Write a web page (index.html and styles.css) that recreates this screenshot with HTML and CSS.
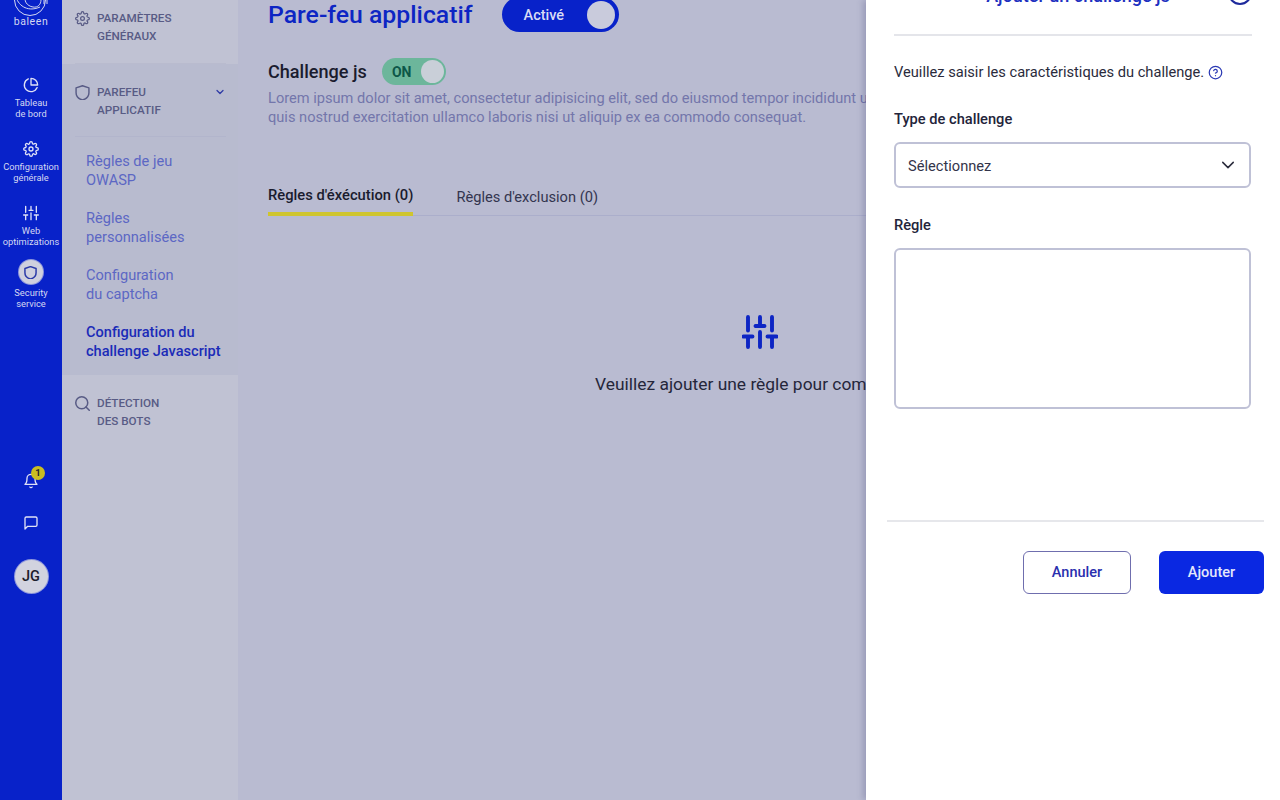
FILE: index.html
```html
<!DOCTYPE html>
<html lang="fr">
<head>
    <meta charset="UTF-8">
    <meta name="viewport" content="width=device-width, initial-scale=1.0">
    <title>Baleen - Pare-feu applicatif</title>
    <link rel="stylesheet" href="styles.css">
</head>
<body>
    <div class="app">
        <!-- Main rail -->
        <nav class="rail">
            <div class="rail-logo">
                <svg class="logo-mark" viewBox="0 0 36 16" fill="none" stroke="currentColor" stroke-width="1">
                    <circle cx="17" cy="0" r="15.5"/>
                    <path d="M3 -3c3 10 13 15 24 10"/>
                    <path d="M13 -6c-3 7 1 12 7 13 5 1 8-3 8-7"/>
                    <path d="M31 -2v6M34 -2v6"/>
                </svg>
                <span class="logo-text">baleen</span>
            </div>
            <div class="rail-item">
                <svg class="rail-icon" viewBox="0 0 24 24"><path d="M21.21 15.89A10 10 0 1 1 8 2.83"/><path d="M22 12A10 10 0 0 0 12 2v10z"/></svg>
                <span>Tableau<br>de bord</span>
            </div>
            <div class="rail-item">
                <svg class="rail-icon" viewBox="0 0 24 24"><circle cx="12" cy="12" r="3"/><path d="M19.4 15a1.65 1.65 0 0 0 .33 1.82l.06.06a2 2 0 0 1 0 2.83 2 2 0 0 1-2.83 0l-.06-.06a1.65 1.65 0 0 0-1.82-.33 1.65 1.65 0 0 0-1 1.51V21a2 2 0 0 1-2 2 2 2 0 0 1-2-2v-.09A1.65 1.65 0 0 0 9 19.4a1.65 1.65 0 0 0-1.82.33l-.06.06a2 2 0 0 1-2.83 0 2 2 0 0 1 0-2.83l.06-.06a1.65 1.65 0 0 0 .33-1.82 1.65 1.65 0 0 0-1.51-1H3a2 2 0 0 1-2-2 2 2 0 0 1 2-2h.09A1.65 1.65 0 0 0 4.6 9a1.65 1.65 0 0 0-.33-1.82l-.06-.06a2 2 0 0 1 0-2.83 2 2 0 0 1 2.83 0l.06.06a1.65 1.65 0 0 0 1.82.33H9a1.65 1.65 0 0 0 1-1.51V3a2 2 0 0 1 2-2 2 2 0 0 1 2 2v.09a1.65 1.65 0 0 0 1 1.51 1.65 1.65 0 0 0 1.82-.33l.06-.06a2 2 0 0 1 2.83 0 2 2 0 0 1 0 2.83l-.06.06a1.65 1.65 0 0 0-.33 1.82V9a1.65 1.65 0 0 0 1.51 1H21a2 2 0 0 1 2 2 2 2 0 0 1-2 2h-.09a1.65 1.65 0 0 0-1.51 1z"/></svg>
                <span>Configuration<br>générale</span>
            </div>
            <div class="rail-item">
                <svg class="rail-icon" viewBox="0 0 24 24"><path d="M4 22v-7M4 11V2M12 22V12M12 8V2M20 22v-7M20 11V2M1 15h6M9 8h6M17 15h6"/></svg>
                <span>Web<br>optimizations</span>
            </div>
            <div class="rail-item rail-item-active">
                <div class="rail-bubble">
                    <svg class="bubble-icon" viewBox="1.5 1 21 21"><path d="M12 2l9 3v7c0 6-5 9-9 10-4-1-9-4-9-10V5z"/></svg>
                </div>
                <span>Security<br>service</span>
            </div>

            <div class="rail-bottom">
                <div class="bell">
                    <svg class="rail-icon" viewBox="0 0 24 24"><path d="M18 8A6 6 0 0 0 6 8c0 7-3 9-3 9h18s-3-2-3-9"/><path d="M13.73 21a2 2 0 0 1-3.46 0"/></svg>
                    <span class="bell-badge">1</span>
                </div>
                <svg class="rail-icon" viewBox="0 0 24 24"><path d="M21 15a2 2 0 0 1-2 2H7l-4 4V5a2 2 0 0 1 2-2h14a2 2 0 0 1 2 2z"/></svg>
                <div class="avatar">JG</div>
            </div>
        </nav>

        <!-- Section menu -->
        <aside class="menu">
            <section class="menu-section menu-section-first">
                <div class="menu-head">
                    <svg class="menu-icon" viewBox="0 0 24 24"><circle cx="12" cy="12" r="3"/><path d="M19.4 15a1.65 1.65 0 0 0 .33 1.82l.06.06a2 2 0 0 1 0 2.83 2 2 0 0 1-2.83 0l-.06-.06a1.65 1.65 0 0 0-1.82-.33 1.65 1.65 0 0 0-1 1.51V21a2 2 0 0 1-2 2 2 2 0 0 1-2-2v-.09A1.65 1.65 0 0 0 9 19.4a1.65 1.65 0 0 0-1.82.33l-.06.06a2 2 0 0 1-2.83 0 2 2 0 0 1 0-2.83l.06-.06a1.65 1.65 0 0 0 .33-1.82 1.65 1.65 0 0 0-1.51-1H3a2 2 0 0 1-2-2 2 2 0 0 1 2-2h.09A1.65 1.65 0 0 0 4.6 9a1.65 1.65 0 0 0-.33-1.82l-.06-.06a2 2 0 0 1 0-2.83 2 2 0 0 1 2.83 0l.06.06a1.65 1.65 0 0 0 1.82.33H9a1.65 1.65 0 0 0 1-1.51V3a2 2 0 0 1 2-2 2 2 0 0 1 2 2v.09a1.65 1.65 0 0 0 1 1.51 1.65 1.65 0 0 0 1.82-.33l.06-.06a2 2 0 0 1 2.83 0 2 2 0 0 1 0 2.83l-.06.06a1.65 1.65 0 0 0-.33 1.82V9a1.65 1.65 0 0 0 1.51 1H21a2 2 0 0 1 2 2 2 2 0 0 1-2 2h-.09a1.65 1.65 0 0 0-1.51 1z"/></svg>
                    <span>Paramètres<br>généraux</span>
                </div>
            </section>

            <section class="menu-section menu-section-open">
                <div class="menu-head">
                    <svg class="menu-icon" viewBox="1.5 1 21 21"><path d="M12 2l9 3v7c0 6-5 9-9 10-4-1-9-4-9-10V5z"/></svg>
                    <span>Parefeu<br>applicatif</span>
                    <svg class="menu-chevron" viewBox="0 0 24 24"><path d="M6 9l6 6 6-6"/></svg>
                </div>
                <ul class="menu-list">
                    <li>Règles de jeu<br>OWASP</li>
                    <li>Règles<br>personnalisées</li>
                    <li>Configuration<br>du captcha</li>
                    <li class="current">Configuration du<br>challenge Javascript</li>
                </ul>
            </section>

            <section class="menu-section">
                <div class="menu-head">
                    <svg class="menu-icon" viewBox="2 2 20 20"><circle cx="11" cy="11" r="8"/><path d="M21 21l-4.35-4.35"/></svg>
                    <span>Détection<br>des bots</span>
                </div>
            </section>
        </aside>

        <!-- Page content -->
        <main class="main">
            <div class="title-row">
                <h1 class="page-title">Pare-feu applicatif</h1>
                <div class="status-toggle">
                    <span class="status-label">Activé</span>
                    <span class="status-knob"></span>
                </div>
            </div>

            <div class="challenge-row">
                <h2 class="challenge-title">Challenge js</h2>
                <div class="on-toggle">
                    <span>ON</span>
                    <span class="on-knob"></span>
                </div>
            </div>
            <p class="lorem">
                Lorem ipsum dolor sit amet, consectetur adipisicing elit, sed do eiusmod tempor incididunt ut labore et dolore magna aliqua.<br>
                quis nostrud exercitation ullamco laboris nisi ut aliquip ex ea commodo consequat.
            </p>

            <div class="tabs">
                <div class="tab tab-active">Règles d'éxécution (0)</div>
                <div class="tab">Règles d'exclusion (0)</div>
            </div>

            <div class="empty">
                <svg class="empty-icon" viewBox="0 0 24 24"><path d="M4 22v-7M4 11V2M12 22V12M12 8V2M20 22v-7M20 11V2M1 15h6M9 8h6M17 15h6"/></svg>
                <p class="empty-text">Veuillez ajouter une règle pour commencer</p>
            </div>
        </main>

        <!-- Add challenge drawer -->
        <div class="drawer">
            <div class="drawer-header">
                <h3 class="drawer-title">Ajouter un challenge js</h3>
                <svg class="drawer-close" viewBox="0 0 24 24"><circle cx="12" cy="12" r="11"/></svg>
            </div>

            <p class="drawer-intro">
                Veuillez saisir les caractéristiques du challenge.
                <svg class="help-icon" viewBox="0 0 24 24"><circle cx="12" cy="12" r="10"/><path d="M9.1 9a3 3 0 0 1 5.8 1c0 2-3 3-3 3"/><path d="M12 17h.01"/></svg>
            </p>

            <label class="field-label">Type de challenge</label>
            <div class="select">
                <span>Sélectionnez</span>
                <svg class="select-chevron" viewBox="0 0 24 24"><path d="M5 8.5l7 7 7-7"/></svg>
            </div>

            <label class="field-label">Règle</label>
            <div class="textarea"></div>

            <div class="drawer-footer">
                <button class="btn btn-outline">Annuler</button>
                <button class="btn btn-primary">Ajouter</button>
            </div>
        </div>
    </div>
</body>
</html>
```

FILE: styles.css
```css
* {
    margin: 0;
    padding: 0;
    box-sizing: border-box;
}

:root {
    --rail-blue: #0822c9;
    --title-blue: #0d25c4;
    --bright-blue: #0a28e2;
    --menu-light: #c0c2d3;
    --menu-dark: #b8bbcf;
    --page-bg: #b9bbd1;
    --ink: #1a1b2e;
    --line: #b9bbd0;
}

body {
    font-family: Roboto, "Liberation Sans", sans-serif;
    color: var(--ink);
    background: var(--page-bg);
    overflow: hidden;
}

.app {
    position: relative;
    display: flex;
    width: 1280px;
    height: 800px;
    overflow: hidden;
}

/* Rail */
.rail {
    width: 62px;
    flex-shrink: 0;
    display: flex;
    flex-direction: column;
    align-items: center;
    background: var(--rail-blue);
    color: #d5d8f2;
}

.rail-logo {
    height: 27px;
    margin-bottom: 50px;
    display: flex;
    flex-direction: column;
    align-items: center;
    justify-content: flex-end;
    color: #d5d8f2;
}

.logo-mark {
    width: 36px;
    height: 16px;
    overflow: hidden;
}

.logo-text {
    font-size: 10.5px;
    line-height: 11px;
    letter-spacing: 0.6px;
}

.rail-item {
    display: flex;
    flex-direction: column;
    align-items: center;
    gap: 4px;
    margin-bottom: 22px;
    font-size: 9.3px;
    line-height: 11px;
    text-align: center;
    white-space: nowrap;
}

.rail-item-active {
    margin-top: -9px;
    gap: 3px;
    margin-bottom: 0;
}

.rail-icon {
    width: 16px;
    height: 16px;
    fill: none;
    stroke: #e0e2f6;
    stroke-width: 2;
    stroke-linecap: round;
    stroke-linejoin: round;
}

.rail-bubble {
    width: 24px;
    height: 24px;
    border-radius: 50%;
    background: #cfd0de;
    box-shadow: 0 0 0 1px #8e97dc;
    display: flex;
    align-items: center;
    justify-content: center;
}

.bubble-icon {
    width: 13px;
    height: 13px;
    fill: none;
    stroke: #2b3aa8;
    stroke-width: 2.4;
    stroke-linejoin: round;
}

.rail-bottom {
    margin-top: 164px;
    display: flex;
    flex-direction: column;
    align-items: center;
    gap: 26px;
}

.bell {
    position: relative;
    height: 16px;
}

.bell-badge {
    position: absolute;
    top: -7px;
    left: 8px;
    width: 14px;
    height: 14px;
    border-radius: 50%;
    background: #c9bd22;
    color: #1d2030;
    font-size: 9.5px;
    font-weight: 700;
    line-height: 14px;
    text-align: center;
}

.avatar {
    width: 33px;
    height: 33px;
    margin-top: 3px;
    border-radius: 50%;
    background: #d2d3df;
    box-shadow: 0 0 0 1px #8e97dc;
    color: #1c1d2c;
    font-size: 14.5px;
    font-weight: 500;
    line-height: 33px;
    text-align: center;
}

/* Section menu */
.menu {
    width: 176px;
    flex-shrink: 0;
    background: var(--menu-light);
}

.menu-section {
    padding-top: 19px;
}

.menu-section-first {
    padding-top: 9px;
    height: 64px;
}

.menu-section-open {
    background: var(--menu-dark);
    height: 311px;
}

.menu-head {
    display: flex;
    align-items: flex-start;
    gap: 7px;
    margin: 0 12px 0 13px;
    font-size: 11.7px;
    font-weight: 500;
    line-height: 18px;
    text-transform: uppercase;
    color: #585b85;
}

.menu-section-first .menu-head {
    padding-bottom: 18px;
    border-bottom: 1px solid #b9bbce;
}

.menu-section-open .menu-head {
    padding-bottom: 17px;
    border-bottom: 1px solid #b2b5cc;
}

.menu-icon {
    width: 15px;
    height: 15px;
    margin-top: 2px;
    flex-shrink: 0;
    fill: none;
    stroke: #585b85;
    stroke-width: 2;
    stroke-linecap: round;
    stroke-linejoin: round;
}

.menu-chevron {
    width: 12px;
    height: 12px;
    margin: 3px 0 0 auto;
    fill: none;
    stroke: #2f3aa6;
    stroke-width: 2.5;
    stroke-linecap: round;
    stroke-linejoin: round;
}

.menu-list {
    list-style: none;
    padding: 15px 0 0 24px;
    font-size: 14.6px;
    line-height: 19px;
    color: #5c67c4;
}

.menu-list li {
    margin-bottom: 19px;
    white-space: nowrap;
}

.menu-list .current {
    color: #1b2bb8;
    font-weight: 500;
}

/* Page content */
.main {
    flex: 1;
    min-width: 0;
    padding: 0 28px 0 30px;
    background: var(--page-bg);
}

.title-row {
    display: flex;
    align-items: center;
    gap: 29px;
    margin-top: -3px;
    height: 35px;
}

.page-title {
    font-size: 24.8px;
    font-weight: 500;
    color: var(--title-blue);
    white-space: nowrap;
}

.status-toggle {
    width: 117px;
    height: 35px;
    padding: 0 4px 0 22px;
    border-radius: 18px;
    background: var(--rail-blue);
    color: #d9dcf4;
    font-size: 14.5px;
    font-weight: 500;
    display: flex;
    align-items: center;
    justify-content: space-between;
}

.status-label {
    padding-top: 2px;
}

.status-knob {
    width: 28px;
    height: 28px;
    border-radius: 50%;
    background: #c9cbdc;
}

.challenge-row {
    display: flex;
    align-items: center;
    gap: 15px;
    margin-top: 26px;
    height: 27px;
}

.challenge-title {
    font-size: 18.1px;
    font-weight: 500;
    color: var(--ink);
}

.on-toggle {
    width: 64px;
    height: 27px;
    padding: 0 2px 0 10px;
    border-radius: 14px;
    background: #6cb69b;
    color: #0d5748;
    font-size: 14px;
    font-weight: 700;
    display: flex;
    align-items: center;
    justify-content: space-between;
}

.on-knob {
    width: 23px;
    height: 23px;
    border-radius: 50%;
    background: #c9cfd8;
}

.lorem {
    margin-top: 4px;
    font-size: 14.64px;
    line-height: 19px;
    color: #7376ab;
    white-space: nowrap;
}

.tabs {
    display: flex;
    gap: 43px;
    margin-top: 58px;
    border-bottom: 1px solid #abaecb;
    font-size: 14.65px;
    line-height: 20px;
    color: #33354f;
}

.tab {
    padding: 2px 0 8px;
}

.tab-active {
    padding: 0 0 7px;
    margin-bottom: -1px;
    border-bottom: 4px solid #cfc52e;
    color: var(--ink);
    font-size: 14.75px;
    font-weight: 500;
}

.empty {
    margin-top: 98px;
    display: flex;
    flex-direction: column;
    align-items: center;
    gap: 22px;
}

.empty-icon {
    width: 36px;
    height: 36px;
    fill: none;
    stroke: var(--title-blue);
    stroke-width: 2.6;
    stroke-linecap: round;
    stroke-linejoin: round;
}

.empty-text {
    font-size: 17.4px;
    line-height: 24px;
    color: #25263a;
    white-space: nowrap;
}

/* Drawer */
.drawer {
    position: absolute;
    top: 0;
    right: 0;
    bottom: 0;
    width: 414px;
    padding: 0 28px;
    background: #fff;
    box-shadow: -3px 0 6px rgba(60, 60, 110, 0.25);
}

.drawer-header {
    display: flex;
    margin-top: -18px;
    padding-bottom: 24px;
    border-bottom: 2px solid #e4e5ea;
    height: 54px;
}

.drawer-title {
    flex: 1;
    padding-left: 34px;
    font-size: 18px;
    font-weight: 500;
    line-height: 28px;
    text-align: center;
    color: #2030c0;
    white-space: nowrap;
}

.drawer-close {
    width: 24px;
    height: 24px;
    margin-top: -1px;
    fill: none;
    stroke: #1e2a9c;
    stroke-width: 2;
}

.drawer-intro {
    margin-top: 26px;
    font-size: 14.65px;
    line-height: 20px;
    color: #2a2b3c;
    white-space: nowrap;
}

.help-icon {
    width: 15px;
    height: 15px;
    vertical-align: -3px;
    fill: none;
    stroke: #2b3ab4;
    stroke-width: 2;
    stroke-linecap: round;
    stroke-linejoin: round;
}

.field-label {
    display: block;
    margin: 27px 0 13px;
    font-size: 14.65px;
    font-weight: 500;
    line-height: 20px;
    color: #23243a;
}

.select {
    width: 357px;
    height: 46px;
    padding: 2px 12px 0;
    border: 2px solid #bfc1d6;
    border-radius: 6px;
    display: flex;
    align-items: center;
    justify-content: space-between;
    font-size: 14.65px;
    color: #33344a;
}

.select-chevron {
    width: 18px;
    height: 18px;
    margin-top: -2px;
    fill: none;
    stroke: #2a2b3c;
    stroke-width: 2;
    stroke-linecap: round;
    stroke-linejoin: round;
}

.textarea {
    width: 357px;
    height: 161px;
    border: 2px solid #bfc1d6;
    border-radius: 6px;
}

.drawer-footer {
    display: flex;
    justify-content: flex-end;
    gap: 28px;
    margin: 111px -12px 0 -7px;
    padding-top: 29px;
    border-top: 2px solid #e6e7eb;
}

.btn {
    height: 43px;
    border-radius: 6px;
    font-family: inherit;
    font-size: 14.5px;
    font-weight: 500;
    cursor: pointer;
}

.btn-outline {
    width: 108px;
    background: #fff;
    border: 1px solid #6f6eae;
    color: #2a2fae;
}

.btn-primary {
    width: 105px;
    background: var(--bright-blue);
    border: none;
    color: #e4e7fb;
}
```
